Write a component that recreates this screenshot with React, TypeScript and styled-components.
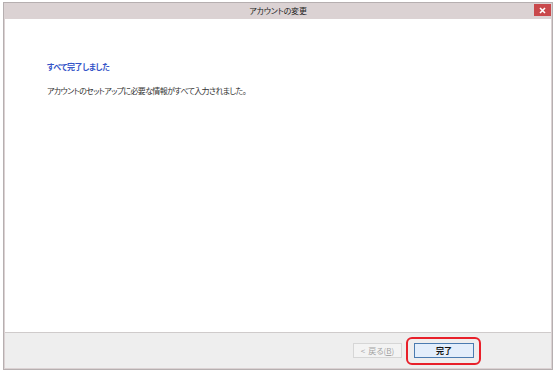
import React from 'react';
import styled, { createGlobalStyle } from 'styled-components';

const GlobalStyle = createGlobalStyle`
  html, body {
    margin: 0;
    padding: 0;
    background: #ffffff;
  }
  body {
    font-family: "Noto Sans CJK JP", "Liberation Sans", sans-serif;
    font-feature-settings: "palt";
  }
`;

const Window = styled.div`
  width: 546px;
  margin: 2px 0 0 3px;
  border: 1px solid #b6afb0;
  background: #dbd2d3;
  padding: 0 1px 1px;
  display: flex;
  flex-direction: column;
`;

const TitleBar = styled.div`
  height: 16px;
  display: grid;
  grid-template-columns: 1fr auto 1fr;
  align-items: center;
`;

const Title = styled.div`
  grid-column: 2;
  font-size: 8px;
  color: #222;
  line-height: 1;
  letter-spacing: -0.2px;
`;

const CloseButton = styled.div`
  grid-column: 3;
  justify-self: end;
  align-self: start;
  margin-top: 1px;
  width: 17px;
  height: 12px;
  background: #c9484b;
  display: flex;
  align-items: center;
  justify-content: center;
`;

const Body = styled.div`
  height: 313px;
  background: #ffffff;
  padding: 43px 0 0 42px;
  box-sizing: border-box;
  display: flex;
  flex-direction: column;
  gap: 14px;
`;

const Heading = styled.div`
  font-size: 8px;
  font-weight: 700;
  color: #3555c8;
  line-height: 10px;
  letter-spacing: -0.4px;
`;

const Message = styled.div`
  font-size: 8px;
  color: #333;
  line-height: 10px;
  letter-spacing: -0.65px;
`;

const Footer = styled.div`
  height: 35px;
  background: #eeeeee;
  border-top: 1px solid #cfcbcb;
  display: flex;
  align-items: center;
  justify-content: flex-end;
  gap: 12px;
  padding-right: 77px;
`;

const Button = styled.div<{ primary?: boolean; disabled?: boolean }>`
  position: relative;
  height: 15px;
  box-sizing: border-box;
  display: flex;
  align-items: center;
  justify-content: center;
  gap: 3px;
  font-size: 8px;
  line-height: 1;
  width: ${p => (p.primary ? '60px' : '49px')};
  background: ${p => (p.primary ? '#e3eefb' : '#f3f3f3')};
  border: 1px solid ${p => (p.primary ? '#4a7bb0' : '#d6d6d6')};
  color: ${p => (p.disabled ? '#a5a5a5' : '#111')};
  font-weight: ${p => (p.primary ? 700 : 400)};
`;

const Highlight = styled.div`
  position: absolute;
  inset: -7px -8px -8px -9px;
  border: 2px solid #e8202a;
  border-radius: 6px;
  pointer-events: none;
`;

const Underline = styled.span`
  text-decoration: underline;
`;

export default function App() {
  return (
    <>
      <GlobalStyle />
      <Window>
        <TitleBar>
          <Title>アカウントの変更</Title>
          <CloseButton>
            <svg width="7" height="7" viewBox="0 0 7 7">
              <path d="M1 1 L6 6 M6 1 L1 6" stroke="#fff" strokeWidth="1.6" />
            </svg>
          </CloseButton>
        </TitleBar>
        <Body>
          <Heading>すべて完了しました</Heading>
          <Message>アカウントのセットアップに必要な情報がすべて入力されました。</Message>
        </Body>
        <Footer>
          <Button disabled>
            <span>&lt;</span>
            <span>
              戻る(<Underline>B</Underline>)
            </span>
          </Button>
          <Button primary>
            完了
            <Highlight />
          </Button>
        </Footer>
      </Window>
    </>
  );
}
